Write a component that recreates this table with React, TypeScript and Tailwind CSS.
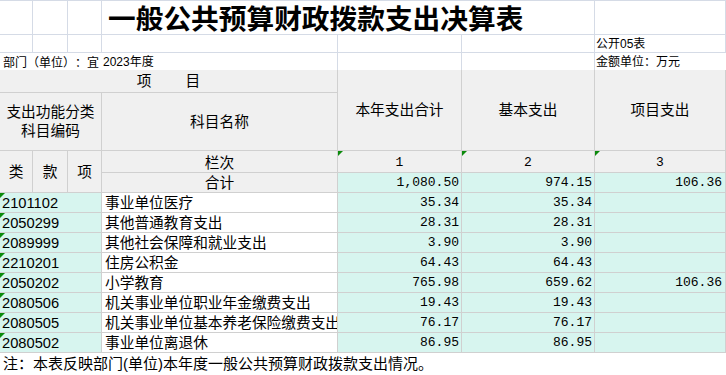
import React from 'react';

const rows = [
  { code: '2101102', name: '事业单位医疗', total: '35.34', basic: '35.34', project: '' },
  { code: '2050299', name: '其他普通教育支出', total: '28.31', basic: '28.31', project: '' },
  { code: '2089999', name: '其他社会保障和就业支出', total: '3.90', basic: '3.90', project: '' },
  { code: '2210201', name: '住房公积金', total: '64.43', basic: '64.43', project: '' },
  { code: '2050202', name: '小学教育', total: '765.98', basic: '659.62', project: '106.36' },
  { code: '2080506', name: '机关事业单位职业年金缴费支出', total: '19.43', basic: '19.43', project: '' },
  { code: '2080505', name: '机关事业单位基本养老保险缴费支出', total: '76.17', basic: '76.17', project: '' },
  { code: '2080502', name: '事业单位离退休', total: '86.95', basic: '86.95', project: '' },
];

// small green corner flag, like the spreadsheet's "number stored as text" marker
function Flag() {
  return <span className="absolute left-0 top-0 h-0 w-0 border-t-[5px] border-r-[5px] border-t-[#0b8a0b] border-r-transparent" />;
}

export default function App() {
  return (
    <div className="w-[726px] h-[375px] overflow-hidden bg-white text-black font-['Liberation_Sans','Noto_Sans_CJK_SC',sans-serif]">
      {/* Title area */}
      <div className="grid grid-cols-[33px_35px_34px_236px_124px_133px_131px] grid-rows-[35px_18px_17px]">
        <div className="border-t border-r border-b border-[#d5dbe6]" />
        <div className="border-t border-r border-b border-[#d5dbe6]" />
        <div className="border-t border-r border-b border-[#d5dbe6]" />
        <div className="col-span-3 flex items-end pl-[6px] border-t border-r border-b border-[#d5dbe6] whitespace-nowrap">
          <span className="text-[27.7px] leading-[33px] font-bold font-['Noto_Sans_CJK_SC',sans-serif]">一般公共预算财政拨款支出决算表</span>
        </div>
        <div className="border-t border-r border-b border-[#d5dbe6]" />

        <div className="border-r border-b border-[#d5dbe6]" />
        <div className="border-r border-b border-[#d5dbe6]" />
        <div className="border-r border-b border-[#d5dbe6]" />
        <div className="border-r border-b border-[#d5dbe6]" />
        <div className="border-r border-b border-[#d5dbe6]" />
        <div className="border-r border-b border-[#d5dbe6]" />
        <div className="flex items-end pl-px text-[12px] leading-[16px] border-r border-b border-[#d5dbe6] whitespace-nowrap">公开05表</div>

        <div className="col-span-3 flex items-end pl-[3px] text-[12px] leading-[16px] overflow-hidden whitespace-nowrap font-['Noto_Sans_CJK_SC',sans-serif] [text-spacing-trim:space-all]">部门（单位）：宜</div>
        <div className="flex items-end pl-px text-[12px] leading-[16px] border-r border-[#d5dbe6] whitespace-nowrap">2023年度</div>
        <div className="border-r border-[#d5dbe6]" />
        <div className="border-r border-[#d5dbe6]" />
        <div className="flex items-end pl-px text-[12px] leading-[16px] whitespace-nowrap">金额单位：万元</div>
      </div>

      {/* Column headers */}
      <div className="grid grid-cols-[33px_35px_34px_236px_124px_133px_131px] grid-rows-[23px_58px_22px_20px] bg-[#f0f0f0] text-[14.7px] leading-[18px]">
        <div className="col-start-1 col-span-4 row-start-1 flex items-center justify-center gap-[34px] border-r border-b border-[#d0d0d0]">
          <span>项</span>
          <span>目</span>
        </div>
        <div className="col-start-5 row-start-1 row-span-2 flex items-center justify-center border-r border-b border-[#d0d0d0]">本年支出合计</div>
        <div className="col-start-6 row-start-1 row-span-2 flex items-center justify-center border-r border-b border-[#d0d0d0]">基本支出</div>
        <div className="col-start-7 row-start-1 row-span-2 flex items-center justify-center border-r border-b border-[#d0d0d0]">项目支出</div>

        <div className="col-start-1 col-span-3 row-start-2 flex items-center justify-center text-center px-[4px] leading-[19px] border-r border-b border-[#d0d0d0]">
          支出功能分类<br />科目编码
        </div>
        <div className="col-start-4 row-start-2 flex items-center justify-center border-r border-b border-[#d0d0d0]">科目名称</div>

        <div className="col-start-1 row-start-3 row-span-2 flex items-center justify-center border-r border-b border-[#d0d0d0]">类</div>
        <div className="col-start-2 row-start-3 row-span-2 flex items-center justify-center border-r border-b border-[#d0d0d0]">款</div>
        <div className="col-start-3 row-start-3 row-span-2 flex items-center justify-center border-r border-b border-[#d0d0d0]">项</div>

        <div className="col-start-4 row-start-3 flex items-center justify-center pt-[2px] border-r border-b border-[#d0d0d0]">栏次</div>
        <div className="relative col-start-5 row-start-3 flex items-center justify-center pt-[2px] font-['Liberation_Mono',monospace] text-[13px] border-r border-b border-[#d0d0d0]">
          <Flag />1
        </div>
        <div className="relative col-start-6 row-start-3 flex items-center justify-center pt-[2px] font-['Liberation_Mono',monospace] text-[13px] border-r border-b border-[#d0d0d0]">
          <Flag />2
        </div>
        <div className="relative col-start-7 row-start-3 flex items-center justify-center pt-[2px] font-['Liberation_Mono',monospace] text-[13px] border-r border-b border-[#d0d0d0]">
          <Flag />3
        </div>

        <div className="col-start-4 row-start-4 flex items-center justify-center border-r border-b border-[#d0d0d0]">合计</div>
        <div className="col-start-5 row-start-4 flex items-center justify-end pr-[2px] bg-[#d7f5ef] font-['Liberation_Mono',monospace] text-[13px] border-r border-b border-[#d0d0d0]">1,080.50</div>
        <div className="col-start-6 row-start-4 flex items-center justify-end pr-[2px] bg-[#d7f5ef] font-['Liberation_Mono',monospace] text-[13px] border-r border-b border-[#d0d0d0]">974.15</div>
        <div className="col-start-7 row-start-4 flex items-center justify-end pr-[3px] bg-[#d7f5ef] font-['Liberation_Mono',monospace] text-[13px] border-r border-b border-[#d0d0d0]">106.36</div>
      </div>

      {/* Data rows */}
      {rows.map((r) => (
        <div key={r.code} className="grid grid-cols-[102px_236px_124px_133px_131px] h-[20px] text-[14.7px] leading-[18px]">
          <div className="relative flex items-center pl-[2px] bg-[#d7f5ef] border-r border-b border-[#d0d0d0]">
            <Flag />
            {r.code}
          </div>
          <div className="flex items-center pl-[3px] overflow-hidden whitespace-nowrap border-r border-b border-[#d0d0d0]">{r.name}</div>
          <div className="flex items-center justify-end pr-[2px] bg-[#d7f5ef] font-['Liberation_Mono',monospace] text-[13px] border-r border-b border-[#d0d0d0]">{r.total}</div>
          <div className="flex items-center justify-end pr-[2px] bg-[#d7f5ef] font-['Liberation_Mono',monospace] text-[13px] border-r border-b border-[#d0d0d0]">{r.basic}</div>
          <div className="flex items-center justify-end pr-[3px] bg-[#d7f5ef] font-['Liberation_Mono',monospace] text-[13px] border-r border-b border-[#d0d0d0]">{r.project}</div>
        </div>
      ))}

      {/* Footnote */}
      <div className="flex items-center h-[22px] pl-[3px] text-[15px] whitespace-nowrap">
        注：本表反映部门(单位)本年度一般公共预算财政拨款支出情况。
      </div>
    </div>
  );
}
